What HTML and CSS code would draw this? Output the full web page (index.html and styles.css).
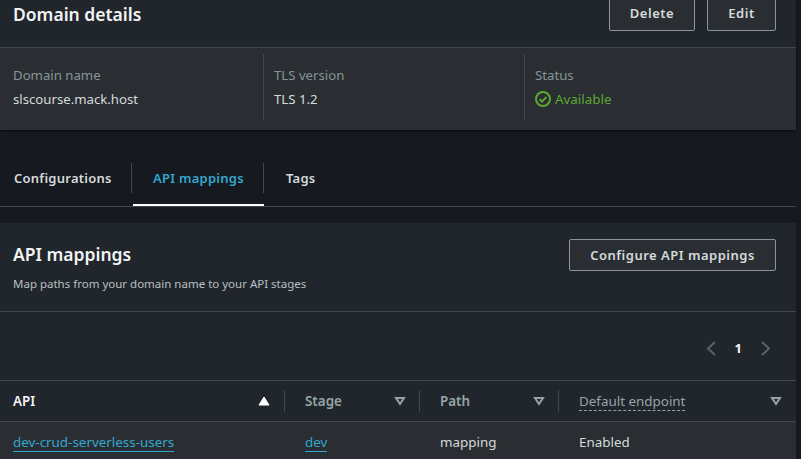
FILE: index.html

```html
<!DOCTYPE html>
<html lang="en">
<head>
  <meta charset="UTF-8">
  <meta name="viewport" content="width=device-width, initial-scale=1.0">
  <title>Domain details</title>
  <link rel="stylesheet" href="styles.css">
</head>
<body>
  <section class="card details-card">
    <div class="card-head domain-head">
      <h1>Domain details</h1>
      <div class="actions">
        <button class="btn btn-delete">Delete</button>
        <button class="btn btn-edit">Edit</button>
      </div>
    </div>
    <div class="details">
      <div class="detail first">
        <div class="detail-label">Domain name</div>
        <div class="detail-value">slscourse.mack.host</div>
      </div>
      <div class="detail second">
        <div class="detail-label">TLS version</div>
        <div class="detail-value">TLS 1.2</div>
      </div>
      <div class="detail third">
        <div class="detail-label">Status</div>
        <div class="detail-value status">
          <svg width="16" height="16" viewBox="0 0 16 16" fill="none" stroke="#5da92f" stroke-width="2">
            <circle cx="8" cy="8" r="7"/>
            <path d="M4.6 8.2l2.4 2.4 4.4-4.6"/>
          </svg>
          <span class="status-text">Available</span>
        </div>
      </div>
    </div>
  </section>

  <nav class="tabs">
    <a class="tab tab-config">Configurations</a>
    <a class="tab tab-api active">API mappings</a>
    <a class="tab tab-tags">Tags</a>
  </nav>

  <section class="card mappings-card">
    <div class="card-head mappings-head">
      <div>
        <h2>API mappings</h2>
        <p>Map paths from your domain name to your API stages</p>
      </div>
      <button class="btn btn-config">Configure API mappings</button>
    </div>
    <div class="pager">
      <svg width="10" height="15" viewBox="0 0 10 15" fill="none" stroke="#5c636b" stroke-width="2"><path d="M9 1L2 7.5 9 14"/></svg>
      <span class="page-num">1</span>
      <svg width="10" height="15" viewBox="0 0 10 15" fill="none" stroke="#5c636b" stroke-width="2"><path d="M1 1l7 6.5L1 14"/></svg>
    </div>
    <div class="table-row table-head">
      <div class="col col-api sorted">API
        <svg class="sort" width="12" height="10" viewBox="0 0 12 10"><path d="M6 1l5 8H1z" fill="#fff" stroke="#fff"/></svg>
      </div>
      <div class="col col-stage">Stage
        <svg class="sort" width="12" height="10" viewBox="0 0 12 10"><path d="M2 2h8L6 8z" fill="none" stroke="#95a5a6" stroke-width="2"/></svg>
      </div>
      <div class="col col-path">Path
        <svg class="sort" width="12" height="10" viewBox="0 0 12 10"><path d="M2 2h8L6 8z" fill="none" stroke="#95a5a6" stroke-width="2"/></svg>
      </div>
      <div class="col col-default"><span class="dotted">Default endpoint</span>
        <svg class="sort" width="12" height="10" viewBox="0 0 12 10"><path d="M2 2h8L6 8z" fill="none" stroke="#95a5a6" stroke-width="2"/></svg>
      </div>
    </div>
    <div class="table-row table-body">
      <div class="col col-api"><a class="link">dev-crud-serverless-users</a></div>
      <div class="col col-stage"><a class="link">dev</a></div>
      <div class="col col-path">mapping</div>
      <div class="col col-default">Enabled</div>
    </div>
  </section>
</body>
</html>
```

FILE: styles.css

```css
html, body {
  height: 100%;
  overflow: hidden;
}
body {
  margin: 0;
  background-color: #16191f;
  color: #d5dbdb;
  font-family: "Noto Sans", "Open Sans", sans-serif;
  font-size: 13.4px;
}
.card {
  width: 796px;
  background-color: #21252c;
}
.details-card {
  box-shadow: 0 1px 2px rgba(0, 0, 0, 0.6);
}
.card-head {
  display: flex;
  justify-content: space-between;
}
.domain-head {
  height: 47px;
  padding: 0 20px 0 13px;
  box-sizing: content-box;
  width: 763px;
  border-bottom: 1px solid #414750;
}
h1, h2 {
  margin: 0;
  color: #f2f3f3;
  font-size: 17.5px;
  font-weight: 600;
}
h1 {
  line-height: 28px;
}
.actions {
  display: flex;
  gap: 12px;
  margin-top: -5px;
}
.btn {
  height: 36px;
  padding: 0;
  background-color: #2a2e33;
  border: 1px solid #879596;
  border-radius: 2px;
  color: #d5dbdb;
  font-family: inherit;
  font-size: 13px;
  font-weight: 600;
  letter-spacing: 0.5px;
}
.btn-delete {
  width: 86px;
}
.btn-edit {
  width: 69px;
}
.btn-config {
  width: 207px;
  height: 32px;
  margin-top: 16px;
}
.details {
  display: flex;
  height: 82px;
  box-sizing: border-box;
  padding-top: 6px;
  background-color: #2a2e33;
  font-size: 13.2px;
}
.detail {
  height: 66px;
  padding: 11px 0 0 10px;
  box-sizing: border-box;
  border-left: 1px solid #414750;
}
.detail.first {
  width: 263px;
  padding-left: 13px;
  border-left: 0;
}
.detail.second {
  width: 261px;
}
.detail.third {
  flex: 1;
}
.detail-label {
  color: #879596;
  line-height: 20px;
}
.detail-value {
  margin-top: 4px;
  line-height: 20px;
}
.status {
  display: flex;
  align-items: center;
  gap: 4px;
  color: #5da92f;
}
.status-text {
  font-size: 13.4px;
}
.tabs {
  display: flex;
  height: 77px;
  box-sizing: border-box;
  padding-top: 33px;
  width: 796px;
  border-bottom: 1px solid #414750;
}
.tab {
  height: 43px;
  box-sizing: border-box;
  line-height: 30px;
  font-size: 13px;
  font-weight: 600;
  color: #d5dbdb;
  letter-spacing: 0.25px;
}
.tab-config {
  width: 132px;
  height: 30px;
  padding-left: 14px;
  border-right: 1px solid #414750;
}
.tab-api {
  width: 131px;
  margin-left: 1px;
  padding-left: 20px;
  color: #33a8cf;
  border-bottom: 2px solid #fff;
  position: relative;
}
.tab-api::after {
  content: "";
  position: absolute;
  right: 0;
  top: 0;
  height: 30px;
  border-right: 1px solid #414750;
}
.tab-tags {
  padding-left: 22px;
}
.mappings-card {
  margin-top: 16px;
}
.mappings-head {
  height: 89px;
  box-sizing: border-box;
  padding: 0 20px 0 13px;
  border-bottom: 1px solid #414750;
}
h2 {
  margin-top: 17px;
  line-height: 28px;
}
.mappings-head p {
  margin: 7px 0 0;
  font-size: 11.5px;
  line-height: 17px;
  color: #b8c0c0;
}
.pager {
  display: flex;
  align-items: center;
  justify-content: flex-end;
  gap: 19px;
  height: 69px;
  box-sizing: border-box;
  padding: 4px 25px 0 0;
  border-bottom: 1px solid #414750;
}
.page-num {
  color: #f2f3f3;
  font-weight: 700;
  font-size: 13px;
}
.table-row {
  display: flex;
  box-sizing: border-box;
}
.table-head {
  height: 41px;
  border-bottom: 1px solid #414750;
  color: #95a5a6;
  font-weight: 600;
}
.table-body {
  height: 40px;
  background-color: #2a2e33;
  color: #d5dbdb;
}
.col {
  display: flex;
  align-items: center;
  justify-content: space-between;
  box-sizing: border-box;
  padding-left: 21px;
  padding-right: 13px;
}
.table-head .col {
  position: relative;
}
.table-head .col:not(:first-child)::before {
  content: "";
  position: absolute;
  left: 0;
  top: 9px;
  height: 22px;
  border-left: 1px solid #414750;
}
.col-api {
  width: 284px;
  padding-left: 13px;
  padding-right: 14px;
}
.col-stage {
  width: 135px;
}
.col-path {
  width: 139px;
}
.col-default {
  width: 238px;
  padding-right: 14px;
}
.sorted {
  color: #f2f3f3;
}
.dotted {
  font-weight: 400;
  border-bottom: 1px dashed #95a5a6;
}
.link {
  color: #33a8cf;
  border-bottom: 1px solid #33a8cf;
}
```
